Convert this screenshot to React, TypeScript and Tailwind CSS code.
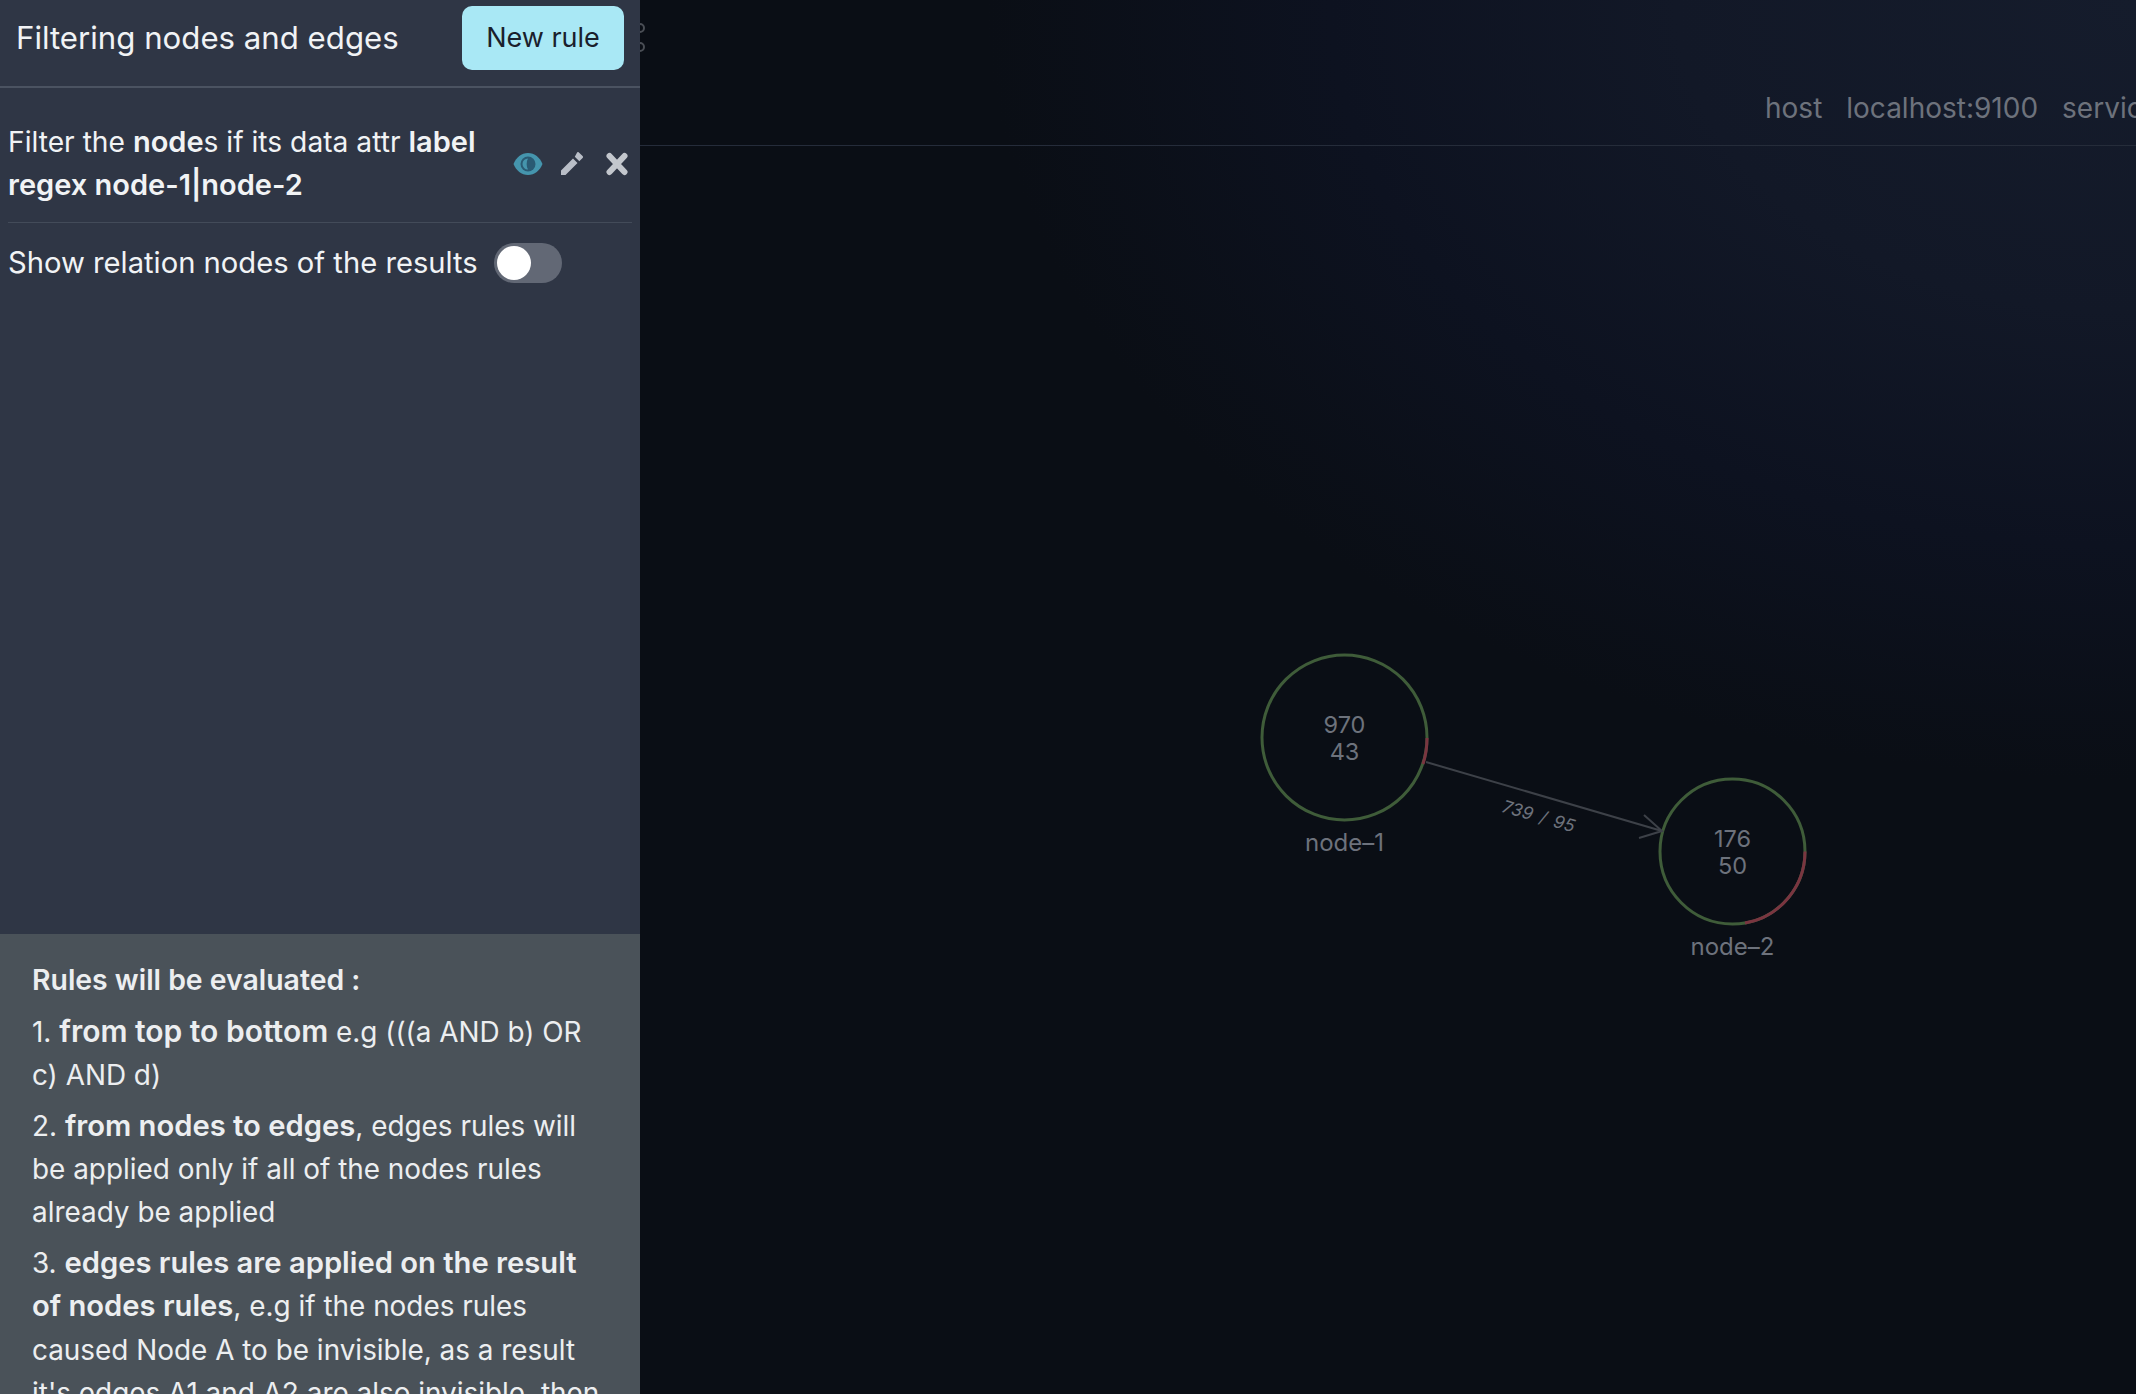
export default function App() {
  return (
    <div className="flex h-[1394px] w-[2136px] overflow-hidden bg-[#0a0e15] text-[28.8px] leading-[43.2px] font-['Inter',sans-serif]">
      <aside className="flex h-full w-[640px] shrink-0 flex-col overflow-hidden bg-[#2f3645] text-[#f1f3f5]">
        <header className="flex h-[88px] shrink-0 items-center justify-between border-b-2 border-[#4b5361] px-4 pt-[6px] pb-[16px]">
          <h1 className="pt-[2px] text-[31.2px] font-normal">Filtering nodes and edges</h1>
          <button className="flex h-[64px] w-[162px] items-center justify-center rounded-[10px] bg-[#a9e8f5] text-[27px] text-[#1a202c]">New rule</button>
        </header>
        <div className="mx-2 mt-[33px] flex h-[102px] shrink-0 items-start border-b border-[#434b59]">
          <p className="w-[484px] text-[28.2px]">Filter the <b className="text-[29px] leading-none font-semibold">node</b>s if its data attr <b className="text-[29px] leading-none font-semibold">label regex node-1|node-2</b></p>
          <div className="ml-[21px] mt-[31px] flex items-center gap-[17px]">
            <svg width="30" height="24" viewBox="0 0 30 24">
              <path fill="#4595ad" d="M15 1C8.500 1 3 5.500 .500 12 3 18.500 8.500 23 15 23s12-4.500 14.500-11C27 5.500 21.500 1 15 1z" />
              <circle cx="15" cy="12" r="7.500" fill="#2a5a73" />
              <path fill="#4595ad" d="M15 6.500a5.500 5.500 0 000 11c-1.800-3-1.800-8 0-11z" />
            </svg>
            <svg width="24" height="24" viewBox="0 0 24 24">
              <path fill="#b9bec7" d="M1 18.500V23h4.500L17.500 11 13 6.500 1 18.500zM22.600 5.900a1.300 1.300 0 000-1.800l-3.700-3.700a1.300 1.300 0 00-1.800 0L14.800 4.700l4.500 4.500 3.300-3.300z" />
            </svg>
            <svg className="ml-[5px]" width="22" height="24" viewBox="0 0 22 24">
              <path fill="none" stroke="#c3c7cd" strokeWidth="6" strokeLinecap="round" d="M3.500 4l15 16M18.500 4l-15 16" />
            </svg>
          </div>
        </div>
        <div className="mx-2 mt-[18px] flex shrink-0 items-center">
          <span className="text-[29.2px]">Show relation nodes of the results</span>
          <span className="ml-4 flex h-[40px] w-[68px] items-center rounded-full bg-[#626875] pl-[3px]">
            <span className="h-[34px] w-[34px] rounded-full bg-white" />
          </span>
        </div>
        <div className="flex-1" />
        <section className="h-[460px] shrink-0 overflow-hidden bg-[#4a5259] px-8 pt-[24px] text-[27.9px] text-[#eceef0]">
          <p className="mb-[10px] text-[28.4px] font-semibold">Rules will be evaluated :</p>
          <p className="mb-[7px]">1. <b className="text-[30px] leading-none font-semibold">from top to bottom</b> e.g (((a AND b) OR c) AND d)</p>
          <p className="mb-[8px]">2. <b className="text-[29.2px] leading-none font-semibold">from nodes to edges</b>, edges rules will be applied only if all of the nodes rules already be applied</p>
          <p>3. <b className="text-[29.2px] leading-none font-semibold">edges rules are applied on the result of nodes rules</b>, e.g if the nodes rules caused Node A to be invisible, as a result it's edges A1 and A2 are also invisible, then</p>
        </section>
      </aside>
      <main className="relative h-full flex-1 overflow-hidden bg-[radial-gradient(ellipse_1150px_780px_at_100%_0%,#151c2c_0%,#121827_40%,#0d1220_70%,#0a0e15_100%)]">
        <div className="absolute left-[-5px] top-[23px] flex flex-col gap-[9px]">
          <span className="h-[10px] w-[10px] rounded-full border-2 border-[#4a4e55]" />
          <span className="h-[10px] w-[10px] rounded-full border-2 border-[#4a4e55]" />
        </div>
        <div className="flex h-[146px] items-end gap-[24px] whitespace-nowrap border-b border-[#252c3a] pb-[15px] pl-[1125px] text-[28px] text-[#6d727c]">
          <span>host</span><span>localhost:9100</span><span>service</span>
        </div>
        <svg className="absolute left-[-640px] top-0" width="2136" height="1394" viewBox="0 0 2136 1394" fill="none">
          <circle cx="1344.500" cy="737.500" r="82.500" stroke="#3f5c39" strokeWidth="3" />
          <path d="M1427 738A82.500 82.500 0 0 1 1423 764" stroke="#7a3540" strokeWidth="3" />
          <circle cx="1732.500" cy="851.500" r="72.500" stroke="#3f5c39" strokeWidth="3" />
          <path d="M1805 851.500A72.500 72.500 0 0 1 1745 923" stroke="#7a3540" strokeWidth="3" />
          <path d="M1426 762L1662 831M1644 815L1662 831L1639 838" stroke="#3d4148" strokeWidth="2" />
          <g fontFamily="Inter, sans-serif" fill="#6d727c" textAnchor="middle">
            <text x="1344.500" y="733" fontSize="23.500">970</text>
            <text x="1344.500" y="760" fontSize="23.500">43</text>
            <text x="1344.500" y="851" fontSize="24">node–1</text>
            <text x="1732.500" y="847" fontSize="23.500">176</text>
            <text x="1732.500" y="874" fontSize="23.500">50</text>
            <text x="1732.500" y="955" fontSize="24">node–2</text>
            <text x="0" y="0" fontSize="17.500" fontStyle="italic" wordSpacing="3" transform="translate(1537 822) rotate(16)">739 / 95</text>
          </g>
        </svg>
      </main>
    </div>
  );
}
